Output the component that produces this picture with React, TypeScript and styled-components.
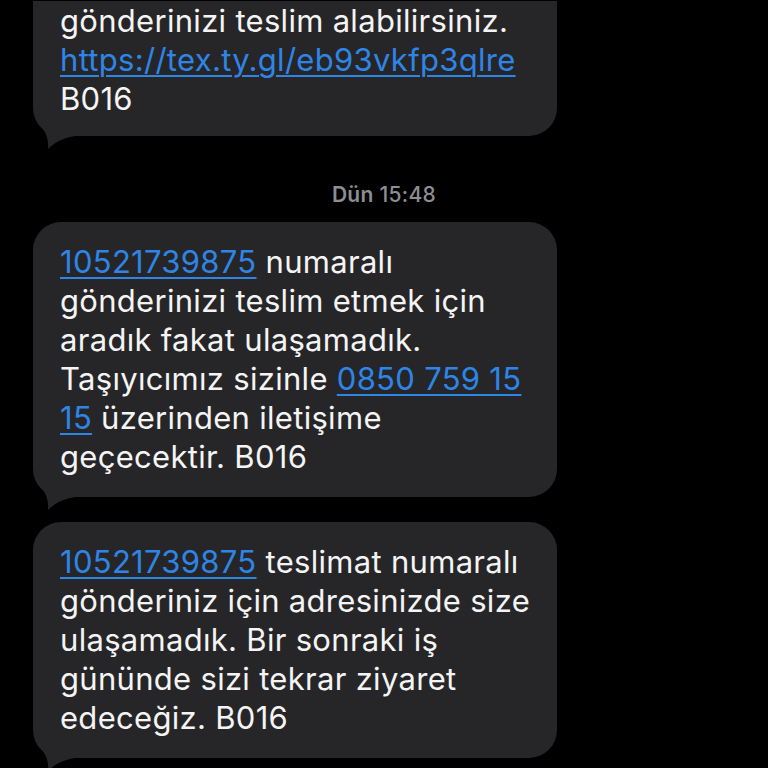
import React from 'react';
import styled, { createGlobalStyle } from 'styled-components';

const GlobalStyle = createGlobalStyle`
  html, body {
    margin: 0;
    padding: 0;
    background: #000;
  }
  body {
    font-family: Inter, "Noto Sans", "Liberation Sans", sans-serif;
    -webkit-font-smoothing: antialiased;
  }
`;

const Screen = styled.div`
  width: 768px;
  height: 768px;
  overflow: hidden;
  background: #000;
  display: flex;
  flex-direction: column;
  padding: 0 0 0 33px;
  box-sizing: border-box;
`;

const Bubble = styled.div<{ $clipped?: boolean; $gap?: number }>`
  position: relative;
  width: 524px;
  box-sizing: border-box;
  background: #262628;
  color: #f4f4f4;
  font-size: 31px;
  line-height: 39px;
  letter-spacing: 0.3px;
  padding: ${(p) => (p.$clipped ? '0 20px 18px 27px' : '20px 20px 21px 27px')};
  margin-top: ${(p) => (p.$clipped ? 1 : p.$gap ?? 0)}px;
  border-radius: ${(p) => (p.$clipped ? '0 0 28px 28px' : '28px')};
`;

const Line = styled.span`
  display: block;
  white-space: nowrap;
`;

const Link = styled.span`
  color: #2f85e6;
  text-decoration: underline;
  text-decoration-thickness: 2px;
  text-underline-offset: 4px;
`;

const TailShape = styled.svg`
  position: absolute;
  left: 0;
  bottom: -14px;
  width: 44px;
  height: 34px;
`;

const Stamp = styled.div`
  align-self: center;
  margin: 47px 0 15px -33px;
  height: 24px;
  line-height: 24px;
  font-size: 21px;
  letter-spacing: 0.3px;
  color: #8d8d92;
  font-weight: 500;
`;

const StampDay = styled.span`
  font-weight: 600;
`;

const Tail = () => (
  <TailShape viewBox="0 -20 44 34">
    <path
      d="M9 -8.5 C13 -3 16 4 15 13 C21 7 29 2 42 0 L42 -16 L8 -16 Z"
      fill="#262628"
    />
  </TailShape>
);

export default function App() {
  return (
    <>
      <GlobalStyle />
      <Screen>
        <Bubble $clipped>
          <Line>gönderinizi teslim alabilirsiniz.</Line>
          <Line>
            <Link>https://tex.ty.gl/eb93vkfp3qlre</Link>
          </Line>
          <Line>B016</Line>
          <Tail />
        </Bubble>

        <Stamp>
          <StampDay>Dün</StampDay> 15:48
        </Stamp>

        <Bubble>
          <Line>
            <Link>10521739875</Link> numaralı
          </Line>
          <Line>gönderinizi teslim etmek için</Line>
          <Line>aradık fakat ulaşamadık.</Line>
          <Line>
            Taşıyıcımız sizinle <Link>0850 759 15</Link>
          </Line>
          <Line>
            <Link>15</Link> üzerinden iletişime
          </Line>
          <Line>geçecektir. B016</Line>
          <Tail />
        </Bubble>

        <Bubble $gap={25}>
          <Line>
            <Link>10521739875</Link> teslimat numaralı
          </Line>
          <Line>gönderiniz için adresinizde size</Line>
          <Line>ulaşamadık. Bir sonraki iş</Line>
          <Line>gününde sizi tekrar ziyaret</Line>
          <Line>edeceğiz. B016</Line>
          <Tail />
        </Bubble>
      </Screen>
    </>
  );
}
